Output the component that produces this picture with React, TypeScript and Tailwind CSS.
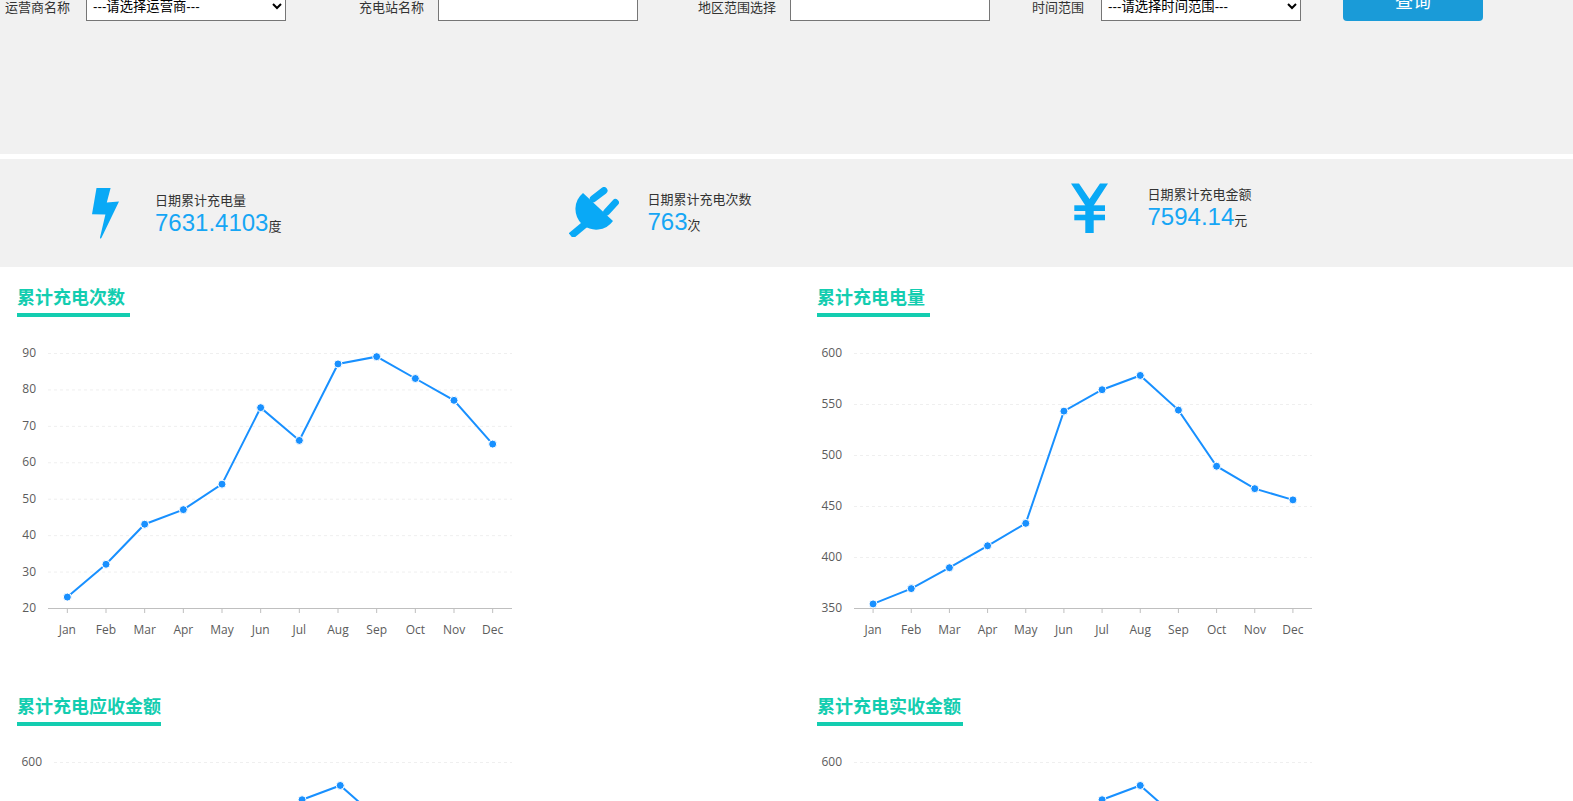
const MONTHS = ['Jan', 'Feb', 'Mar', 'Apr', 'May', 'Jun', 'Jul', 'Aug', 'Sep', 'Oct', 'Nov', 'Dec']

const CHARGE_COUNT = [23, 32, 43, 47, 54, 75, 66, 87, 89, 83, 77, 65]
const CHARGE_POWER = [354, 369, 389.5, 411, 433, 543, 564, 578, 544, 489, 467, 456]
const RECEIVABLE = [354, 369, 389.5, 411, 433, 543, 563, 577, 544, 489, 467, 456]

const COUNT_TICKS = [20, 30, 40, 50, 60, 70, 80, 90]
const POWER_TICKS = [350, 400, 450, 500, 550, 600]

const PLOT_TOP = 36
const PLOT_BOTTOM = 291
const PLOT_RIGHT = 512

interface ChartProps {
  values: number[]
  ticks: number[]
  axisLeft: number
}

function LineChart({ values, ticks, axisLeft }: ChartProps) {
  const min = ticks[0]
  const max = ticks[ticks.length - 1]
  const step = (PLOT_RIGHT - axisLeft) / MONTHS.length
  const xAt = (i: number) => axisLeft + step * (i + 0.5)
  const yAt = (v: number) => PLOT_BOTTOM - ((v - min) / (max - min)) * (PLOT_BOTTOM - PLOT_TOP)
  const line = values.map((v, i) => `${xAt(i)},${yAt(v)}`).join(' ')

  return (
    <svg width={540} height={358} className="block [font-family:'Open_Sans',sans-serif]">
      {ticks.map((t) => (
        <g key={t}>
          {t !== min && (
            <line
              x1={axisLeft}
              x2={PLOT_RIGHT}
              y1={yAt(t) + 0.5}
              y2={yAt(t) + 0.5}
              stroke="#efefef"
              strokeDasharray="3 3"
            />
          )}
          <text x={axisLeft - 12} y={yAt(t) + 4} textAnchor="end" fontSize={12} fill="#5c5c5c">
            {t}
          </text>
        </g>
      ))}
      <line x1={axisLeft} x2={PLOT_RIGHT} y1={PLOT_BOTTOM + 0.5} y2={PLOT_BOTTOM + 0.5} stroke="#bfbfbf" />
      {MONTHS.map((m, i) => (
        <g key={m}>
          <line x1={xAt(i)} x2={xAt(i)} y1={PLOT_BOTTOM} y2={PLOT_BOTTOM + 5} stroke="#bfbfbf" />
          <text x={xAt(i)} y={PLOT_BOTTOM + 26} textAnchor="middle" fontSize={12} fill="#5c5c5c">
            {m}
          </text>
        </g>
      ))}
      <polyline points={line} fill="none" stroke="#1890ff" strokeWidth={2} />
      {values.map((v, i) => (
        <circle key={i} cx={xAt(i)} cy={yAt(v)} r={4} fill="#1890ff" stroke="#fff" strokeWidth={1} />
      ))}
    </svg>
  )
}

function BoltIcon() {
  return (
    <svg width={27} height={51} viewBox="0 0 27 51" className="fill-[#09a9f6]">
      <path d="M4.5 0H18.6L14.8 14.5L27 13.4L9.6 49.6C9 51 8 51 8 49.6L13.4 26.6L0 26.2Z" />
    </svg>
  )
}

function PlugIcon() {
  return (
    <svg width={50} height={50} viewBox="0 0 50 50" className="fill-[#09a9f6] stroke-[#09a9f6]">
      <path d="M24.3 11.7L35 3.6M37.7 25L46.4 15.5" strokeWidth={7} strokeLinecap="round" fill="none" />
      <path d="M26 29L2 49" strokeWidth={7} fill="none" />
      <path d="M14 6L44 34A20.7 20.7 0 1 1 14 6Z" strokeWidth={0} />
    </svg>
  )
}

function YenIcon() {
  return (
    <svg width={37} height={50} viewBox="0 0 37 50" className="fill-[#09a9f6]">
      <path d="M0 0.5H8L18.5 16L29 0.5H37L22.7 22.5V50H14.3V22.5Z" />
      <rect x={3.3} y={22.3} width={30.7} height={5.7} />
      <rect x={3.3} y={31.7} width={30.7} height={5.6} />
    </svg>
  )
}

interface StatProps {
  label: string
  value: string
  unit: string
}

function StatText({ label, value, unit }: StatProps) {
  return (
    <div className="text-[#333] text-[13px]">
      <p className="leading-[18px]">{label}</p>
      <p className="leading-[26px]">
        <span className="text-[24px] text-[#16a6f5]">{value}</span>
        {unit}
      </p>
    </div>
  )
}

function ChartCard({
  title,
  underline,
  children,
}: {
  title: string
  underline: string
  children: React.ReactNode
}) {
  return (
    <div className="h-[409px]">
      <div className="pl-[17px] pt-[18px]">
        <h2
          className={`inline-block pb-[2px] text-[18px] leading-[26px] font-bold whitespace-nowrap text-[#13cdb0] border-b-4 border-[#13cdb0] ${underline}`}
        >
          {title}
        </h2>
      </div>
      {children}
    </div>
  )
}

export default function App() {
  return (
    <div className="h-screen overflow-hidden bg-white [font-family:'Liberation_Sans','Noto_Sans_CJK_SC',sans-serif]">
      {/* Filtres */}
      <div className="-mt-[19px] h-[173px] bg-[#f1f1f1]">
        <div className="flex items-start text-[13px] text-[#333]">
          <span className="ml-[5px] mt-[18px] leading-[18px]">运营商名称</span>
          <select className="ml-[16px] mt-[10px] w-[200px] h-[30px] bg-white border border-[#767676] pl-[2px] text-[13.33px] text-black">
            <option>---请选择运营商---</option>
          </select>
          <span className="ml-[73px] mt-[18px] leading-[18px]">充电站名称</span>
          <input className="ml-[14px] mt-[10px] w-[200px] h-[30px] bg-white border border-[#767676]" />
          <span className="ml-[60px] mt-[18px] leading-[18px]">地区范围选择</span>
          <input className="ml-[14px] mt-[10px] w-[200px] h-[30px] bg-white border border-[#767676]" />
          <span className="ml-[42px] mt-[18px] leading-[18px]">时间范围</span>
          <select className="ml-[17px] mt-[10px] w-[200px] h-[30px] bg-white border border-[#767676] pl-[2px] text-[13.33px] text-black">
            <option>---请选择时间范围---</option>
          </select>
          <button className="ml-[42px] w-[140px] h-[40px] pt-[2px] rounded-[4px] bg-[#1a9bd8] text-white text-[18px]">
            查询
          </button>
        </div>
      </div>

      {/* Cumuls */}
      <div className="mt-[5px] h-[108px] bg-[#f1f1f1] flex items-start">
        <div className="ml-[92px] mt-[29px]">
          <BoltIcon />
        </div>
        <div className="ml-[36px] mt-[33px]">
          <StatText label="日期累计充电量" value="7631.4103" unit="度" />
        </div>
        <div className="ml-[288px] mt-[28px]">
          <PlugIcon />
        </div>
        <div className="ml-[28px] mt-[32px]">
          <StatText label="日期累计充电次数" value="763" unit="次" />
        </div>
        <div className="ml-[319.5px] mt-[24px]">
          <YenIcon />
        </div>
        <div className="ml-[39.5px] mt-[27px]">
          <StatText label="日期累计充电金额" value="7594.14" unit="元" />
        </div>
      </div>

      {/* Courbes */}
      <div className="grid grid-cols-[800px_1fr]">
        <ChartCard title="累计充电次数" underline="min-w-[113px]">
          <LineChart values={CHARGE_COUNT} ticks={COUNT_TICKS} axisLeft={48} />
        </ChartCard>
        <ChartCard title="累计充电电量" underline="min-w-[113px]">
          <LineChart values={CHARGE_POWER} ticks={POWER_TICKS} axisLeft={54} />
        </ChartCard>
        <ChartCard title="累计充电应收金额" underline="min-w-[113px]">
          <LineChart values={RECEIVABLE} ticks={POWER_TICKS} axisLeft={54} />
        </ChartCard>
        <ChartCard title="累计充电实收金额" underline="min-w-[146px]">
          <LineChart values={RECEIVABLE} ticks={POWER_TICKS} axisLeft={54} />
        </ChartCard>
      </div>
    </div>
  )
}
